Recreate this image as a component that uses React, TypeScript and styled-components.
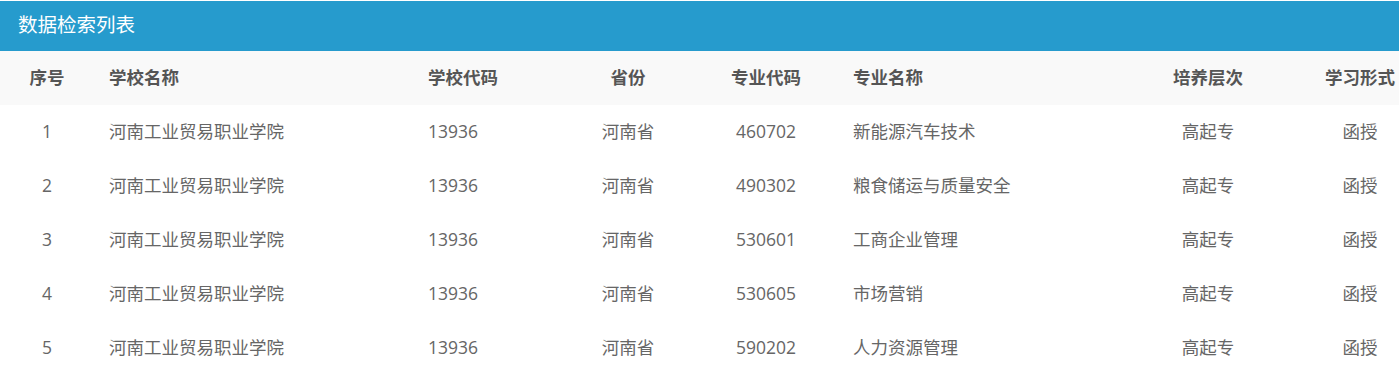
import React from 'react';
import styled, { createGlobalStyle } from 'styled-components';

const GlobalStyle = createGlobalStyle`
    html, body {
        margin: 0;
        padding: 0;
        background: #fff;
        font-family: "Open Sans", "Noto Sans CJK SC", sans-serif;
    }
`;

const Panel = styled.div`
    padding-top: 1px;
    width: 1399px;
`;

const PanelHeading = styled.div`
    box-sizing: border-box;
    height: 50px;
    background: #269bcd;
    color: #fff;
    font-size: 19.5px;
    line-height: 48px;
    padding-left: 18px;
    padding-bottom: 2px;
`;

const cols = '94px 319px 149px 132px 144px 257px 226px 78px';

const Row = styled.div<{ $head?: boolean }>`
    box-sizing: border-box;
    display: grid;
    grid-template-columns: ${cols};
    height: 54px;
    padding-bottom: 3px;
    align-items: center;
    font-size: 17.5px;
    background: ${(p) => (p.$head ? '#f9f9f9' : '#fff')};
    color: ${(p) => (p.$head ? '#555' : '#666')};
    font-weight: ${(p) => (p.$head ? 700 : 400)};
`;

const Cell = styled.div<{ $align?: 'left' | 'center' }>`
    text-align: ${(p) => p.$align || 'center'};
    padding-left: ${(p) => (p.$align === 'left' ? '15px' : '0')};
    white-space: nowrap;
`;

const columns: { title: string; key: string; align: 'left' | 'center' }[] = [
    { title: '序号', key: 'no', align: 'center' },
    { title: '学校名称', key: 'school', align: 'left' },
    { title: '学校代码', key: 'code', align: 'left' },
    { title: '省份', key: 'province', align: 'center' },
    { title: '专业代码', key: 'majorCode', align: 'center' },
    { title: '专业名称', key: 'major', align: 'left' },
    { title: '培养层次', key: 'level', align: 'center' },
    { title: '学习形式', key: 'form', align: 'center' },
];

const majors = [
    ['460702', '新能源汽车技术'],
    ['490302', '粮食储运与质量安全'],
    ['530601', '工商企业管理'],
    ['530605', '市场营销'],
    ['590202', '人力资源管理'],
];

const rows = majors.map(([majorCode, major], i) => ({
    no: String(i + 1),
    school: '河南工业贸易职业学院',
    code: '13936',
    province: '河南省',
    majorCode,
    major,
    level: '高起专',
    form: '函授',
}));

export default function App() {
    return (
        <Panel>
            <GlobalStyle />
            <PanelHeading>数据检索列表</PanelHeading>
            <Row $head>
                {columns.map((c) => (
                    <Cell key={c.key} $align={c.align}>
                        {c.title}
                    </Cell>
                ))}
            </Row>
            {rows.map((r) => (
                <Row key={r.no}>
                    {columns.map((c) => (
                        <Cell key={c.key} $align={c.align}>
                            {(r as any)[c.key]}
                        </Cell>
                    ))}
                </Row>
            ))}
        </Panel>
    );
}
